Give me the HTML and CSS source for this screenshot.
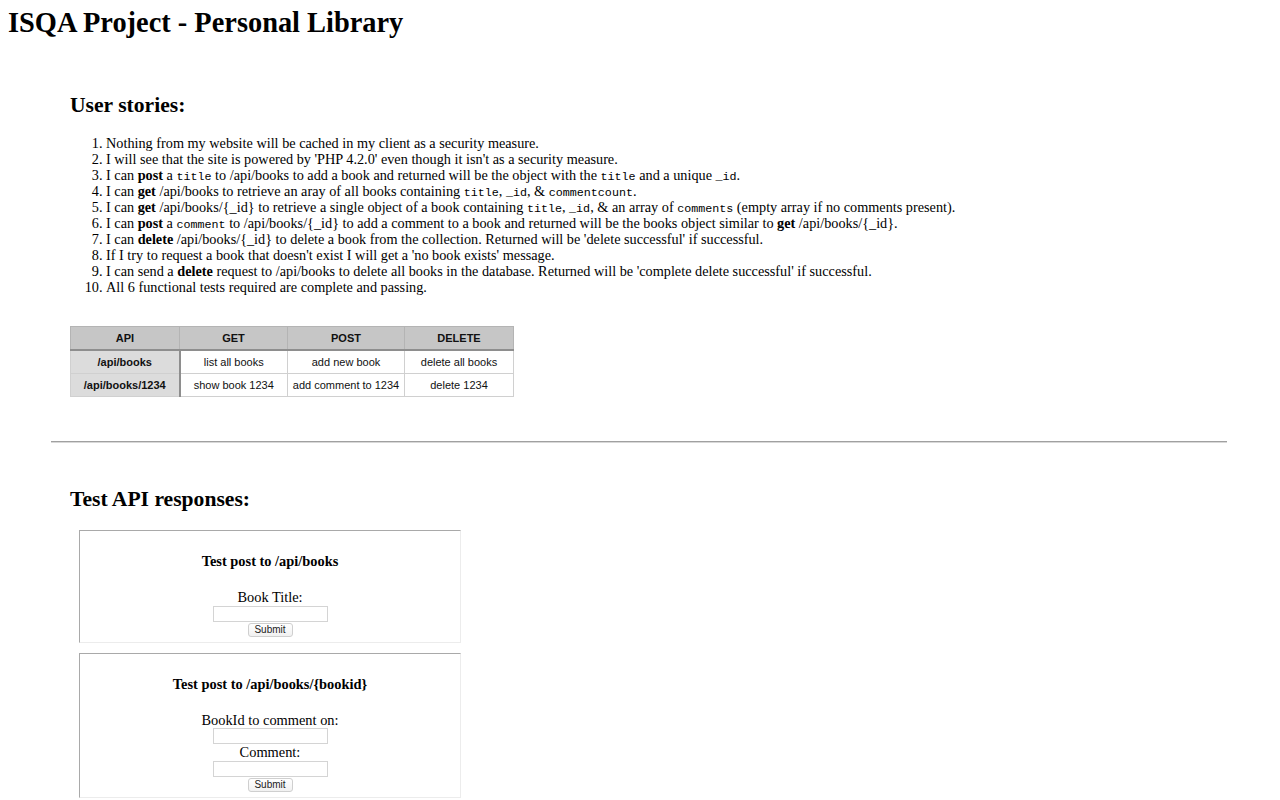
FILE: index.html
```
<!DOCTYPE html>
<html>
<head>
<meta charset="utf-8">
<title>ISQA Project - Personal Library</title>
<link rel="stylesheet" href="styles.css">
</head>
<body>
<header>
  <h1 class="title">ISQA Project - Personal Library</h1>
</header>
<div class="userstories">
  <h2 class="section-title">User stories:</h2>
  <ol class="stories">
    <li>Nothing from my website will be cached in my client as a security measure.</li>
    <li>I will see that the site is powered by 'PHP 4.2.0' even though it isn't as a security measure.</li>
    <li>I can <b>post</b> a <code>title</code> to /api/books to add a book and returned will be the object with the <code>title</code> and a unique <code>_id</code>.</li>
    <li>I can <b>get</b> /api/books to retrieve an aray of all books containing <code>title</code>, <code>_id</code>, &amp; <code>commentcount</code>.</li>
    <li>I can <b>get</b> /api/books/{_id} to retrieve a single object of a book containing <code>title</code>, <code>_id</code>, &amp; an array of <code>comments</code> (empty array if no comments present).</li>
    <li>I can <b>post</b> a <code>comment</code> to /api/books/{_id} to add a comment to a book and returned will be the books object similar to <b>get</b> /api/books/{_id}.</li>
    <li>I can <b>delete</b> /api/books/{_id} to delete a book from the collection. Returned will be 'delete successful' if successful.</li>
    <li>If I try to request a book that doesn't exist I will get a 'no book exists' message.</li>
    <li>I can send a <b>delete</b> request to /api/books to delete all books in the database. Returned will be 'complete delete successful' if successful.</li>
    <li>All 6 functional tests required are complete and passing.</li>
  </ol>
  <table class="api-table">
    <tr>
      <th class="c1">API</th>
      <th class="c2">GET</th>
      <th class="c3">POST</th>
      <th class="c4">DELETE</th>
    </tr>
    <tr>
      <td class="route">/api/books</td>
      <td>list all books</td>
      <td>add new book</td>
      <td>delete all books</td>
    </tr>
    <tr>
      <td class="route">/api/books/1234</td>
      <td>show book 1234</td>
      <td>add comment to 1234</td>
      <td>delete 1234</td>
    </tr>
  </table>
</div>
<hr class="divider">
<div class="testui">
  <h2 class="section-title test-title">Test API responses:</h2>
  <form class="test-form" action="/api/books" method="post">
    <h4 class="form-title">Test post to /api/books</h4>
    <label class="field-label" for="title">Book Title:</label>
    <input class="field" type="text" id="title" name="title">
    <input class="submit" type="submit" value="Submit">
  </form>
  <form class="test-form" action="" method="post">
    <h4 class="form-title">Test post to /api/books/{bookid}</h4>
    <label class="field-label" for="idinputtest">BookId to comment on:</label>
    <input class="field" type="text" id="idinputtest" name="id">
    <label class="field-label" for="comment">Comment:</label>
    <input class="field" type="text" id="comment" name="comment">
    <input class="submit" type="submit" value="Submit">
  </form>
</div>
</body>
</html>
```

FILE: styles.css
```
html, body {
  background: #fff;
}
body {
  margin: 0 8px;
  font-family: "Liberation Serif", "Times New Roman", serif;
  font-size: 14.4px;
  color: #000;
}
.title {
  font-size: 28.4px;
  font-weight: bold;
  margin: 7px 0 0;
}
.userstories {
  margin-left: 62px;
}
.section-title {
  font-size: 21.6px;
  font-weight: bold;
  margin: 53.5px 0 17px;
}
.stories {
  margin: 0;
  padding-left: 36px;
  font-size: 14.25px;
}
.stories li {
  line-height: 16px;
  height: 16px;
}
code {
  font-family: "Liberation Mono", "Courier New", monospace;
  font-size: 11.7px;
  line-height: 1;
}
.api-table {
  margin-top: 31px;
  border-collapse: collapse;
  font-family: "Liberation Sans", Arial, sans-serif;
  font-size: 11px;
  color: #111;
  border: 1px solid #c4c4c4;
}
.api-table th,
.api-table td {
  height: 22px;
  padding: 0;
  text-align: center;
  border: 1px solid #d0d0d0;
}
.api-table th {
  background: #c6c6c6;
  border-color: #b4b4b4;
  border-bottom: 2px solid #8e8e8e;
  font-weight: bold;
}
.api-table .c1 { width: 108px; }
.api-table .c2 { width: 107px; }
.api-table .c3 { width: 116px; }
.api-table .c4 { width: 108px; }
.api-table .route {
  background: #dcdcdc;
  font-weight: bold;
  border-right: 2px solid #8e8e8e;
}
.divider {
  margin: 44px 45px 0 43px;
  border: 0;
  border-top: 1px solid #a0a0a0;
  border-bottom: 1px solid #d8d8d8;
  height: 0;
}
.testui {
  margin-left: 62px;
}
.test-title {
  margin: 44.5px 0 18px;
}
.test-form {
  box-sizing: border-box;
  width: 382px;
  margin: 10px 0 10px 9px;
  padding: 3px 10px 5px;
  border-style: solid;
  border-width: 1px;
  border-color: #a9a9a9 #ececec #ececec #a9a9a9;
  text-align: center;
}
.form-title {
  font-size: 14.4px;
  font-weight: bold;
  margin: 19px 0 19px;
}
.field-label {
  display: block;
  line-height: 16.5px;
}
.field {
  display: block;
  box-sizing: border-box;
  width: 115px;
  height: 16px;
  margin: 0 auto;
  padding: 0 2px;
  border: 1px solid #d4d4d4;
  background: #fff;
  font-size: 11px;
}
.submit {
  display: block;
  box-sizing: border-box;
  width: 45px;
  height: 14px;
  margin: 1px auto 0;
  padding: 0;
  border: 1px solid #cfcfcf;
  border-radius: 3px;
  background: linear-gradient(#ffffff, #f1f1f1);
  font-family: "Liberation Sans", Arial, sans-serif;
  font-size: 10px;
  line-height: 12px;
  color: #222;
}
```
